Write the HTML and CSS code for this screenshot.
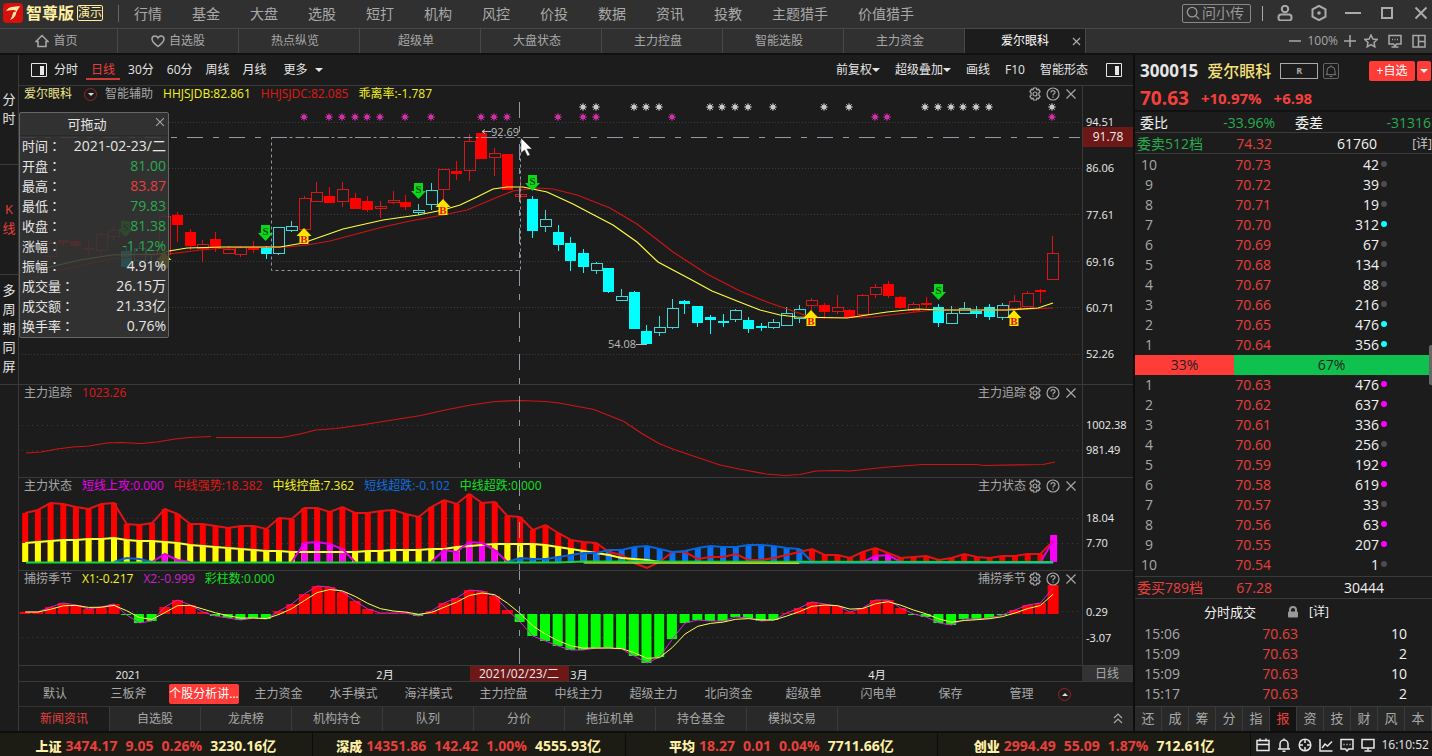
FILE: index.html
```html
<!DOCTYPE html>
<html lang="zh-CN">
<head>
<meta charset="utf-8">
<title>爱尔眼科 300015</title>
<link rel="stylesheet" href="styles.css">
</head>
<body>
<svg class="defs" aria-hidden="true">
  <symbol id="i-gear" viewBox="0 0 14 14"><path d="M5.6 1h2.8l.5 1.7 1.7-.4 1.5 2.3-1.2 1.2v2.4l1.2 1.2-1.5 2.3-1.7-.4-.5 1.7H5.6l-.5-1.7-1.7.4-1.5-2.3 1.2-1.2V5.8L1.900 4.600l1.500-2.300 1.700.400z"/><circle cx="7" cy="7" r="2"/></symbol>
  <symbol id="i-help" viewBox="0 0 14 14"><circle cx="7" cy="7" r="6"/><path d="M5 5.600C5 3 9 3 9 5.400 9 6.800 7 6.900 7 8.400M7 9.600v1.200"/></symbol>
  <symbol id="i-x" viewBox="0 0 14 14"><path d="M2.500 2.500l9 9M11.500 2.500l-9 9"/></symbol>
  <symbol id="i-home" viewBox="0 0 14 14"><path d="M7 1.500L1 7.500h2V12.500h8V7.500h2z"/></symbol>
  <symbol id="i-heart" viewBox="0 0 14 14"><path d="M7 12.500C3 9.500 1 7.500 1 5c0-3.500 4.500-4 6-1 1.500-3 6-2.500 6 1 0 2.500-2 4.500-6 7.500z"/></symbol>
  <symbol id="i-pane" viewBox="0 0 16 16"><path d="M.5 1.500h15v13H.5z"/><path class="solid" d="M9 4h4v9H9z"/></symbol>
  <symbol id="i-bell" viewBox="0 0 16 16"><path d="M8 1.500v1.500M3.500 12V7.500a4.500 4.500 0 0 1 9 0V12M2 12.200h12M6.500 14.200h3"/></symbol>
</svg>

<header class="titlebar">
  <svg class="logo" viewBox="0 0 20 20"><rect width="20" height="20" rx="4" fill="#d7100c"/><path d="M3 8C6 3 10 4 17 3c-1 3-4 5-4 8-1 3-3 5-6 6 3-4 2-7 5-10-3 0-6 0-9 1z" fill="#ffe9a0"/><path d="M8 9l5-1" stroke="#d7100c"/></svg>
  <strong class="brand">智尊版</strong><span class="demo">演示</span>
  <nav class="menu"><a href="#">行情</a><a href="#">基金</a><a href="#">大盘</a><a href="#">选股</a><a href="#">短打</a><a href="#">机构</a><a href="#">风控</a><a href="#">价投</a><a href="#">数据</a><a href="#">资讯</a><a href="#">投教</a><a href="#">主题猎手</a><a href="#">价值猎手</a></nav>
  <div class="winctl">
    <button class="ask"><svg class="ic" viewBox="0 0 16 16"><circle cx="7" cy="7" r="5.500"/><path d="M11 11l4 4"/></svg>问小传</button>
    <i class="bar"></i>
    <button aria-label="用户"><svg class="ic big" viewBox="0 0 16 16"><circle cx="8" cy="4" r="3.200"/><rect x="1.500" y="9.500" width="13" height="6" rx="2.500"/></svg></button>
    <button aria-label="设置"><svg class="ic big" viewBox="0 0 16 16"><path d="M8 .8l6.500 3.600v7.200L8 15.200 1.500 11.600V4.400z"/><circle cx="8" cy="8" r="1.800" class="solid"/></svg></button>
    <button aria-label="最小化"><svg class="ic big" viewBox="0 0 16 16"><path d="M0 8h16"/></svg></button>
    <button aria-label="最大化"><svg class="ic big" viewBox="0 0 16 16"><path d="M3 3h10v10H3z"/></svg></button>
    <button aria-label="关闭"><svg class="ic big" viewBox="0 0 16 16"><path d="M2.500 2.500l11 11M13.500 2.500l-11 11"/></svg></button>
  </div>
</header>

<nav class="tabs">
  <a href="#" class="tab home"><svg class="ic"><use href="#i-home"/></svg>首页</a>
  <a href="#" class="tab fav"><svg class="ic"><use href="#i-heart"/></svg>自选股</a>
  <a href="#" class="tab">热点纵览</a><a href="#" class="tab">超级单</a><a href="#" class="tab">大盘状态</a><a href="#" class="tab">主力控盘</a><a href="#" class="tab">智能选股</a><a href="#" class="tab">主力资金</a>
  <a href="#" class="tab on">爱尔眼科<svg class="ic close"><use href="#i-x"/></svg></a>
  <div class="zoom">
    <button aria-label="缩小"><svg class="ic" viewBox="0 0 14 14"><path d="M1 7h12"/></svg></button><span>100%</span>
    <button aria-label="放大"><svg class="ic" viewBox="0 0 14 14"><path d="M1 7h12M7 1v12"/></svg></button>
    <button class="sp" aria-label="收藏"><svg class="ic" viewBox="0 0 14 14"><path d="M7 1l1.900 4 4.300.5-3.200 3 .8 4.300L7 10.700l-3.800 2.100.8-4.300-3.200-3L5.100 5z"/></svg></button>
    <button class="sp2" aria-label="消息"><svg class="ic" viewBox="0 0 14 14"><path d="M1 1.500h12v8.500H8.500L7 12 5.500 10H1zM3.500 13h7M4 5.500h1M6.500 5.500h1M9 5.500h1"/></svg></button>
    <button class="sp2" aria-label="布局"><svg class="ic" viewBox="0 0 14 14"><path d="M1 1.500h12v11.500H1zM6.500 1.500V13M6.500 7.500h6"/></svg></button>
  </div>
</nav>

<main class="work">
  <nav class="rail"><a href="#">分时</a><a href="#" class="red">K线</a><a href="#">多周期同屏</a></nav>

  <section class="center">
    <div class="toolbar">
      <button aria-label="左侧栏"><svg class="ic pane"><use href="#i-pane"/></svg></button>
      <div class="periods"><button>分时</button><button class="on">日线</button><button>30分</button><button>60分</button><button>周线</button><button>月线</button><button class="more">更多<i class="caret"></i></button></div>
      <div class="tools"><button>前复权<i class="caret"></i></button><button>超级叠加<i class="caret"></i></button><button>画线</button><button>F10</button><button>智能形态</button></div>
      <button aria-label="右侧栏"><svg class="ic pane"><use href="#i-pane"/></svg></button>
    </div>

    <section class="panel main">
      <svg class="plot" id="kline" viewBox="19 86 1114 298" preserveAspectRatio="xMinYMin meet"></svg>
      <div class="legend"><span class="name">爱尔眼科</span><button class="round" aria-label="展开"><i class="caret small"></i></button><span class="aux">智能辅助</span><span class="y">HHJSJDB:82.861</span><span class="r">HHJSJDC:82.085</span><span class="y">乖离率:-1.787</span>
        <span class="acts"><button aria-label="设置"><svg class="ic"><use href="#i-gear"/></svg></button><button aria-label="帮助"><svg class="ic"><use href="#i-help"/></svg></button><button aria-label="关闭"><svg class="ic"><use href="#i-x"/></svg></button></span></div>
      <aside class="tip">
        <h2>可拖动<button aria-label="关闭"><svg class="ic"><use href="#i-x"/></svg></button></h2>
        <dl>
          <div><dt>时间<span lang="zh-TW">：</span></dt><dd>2021-02-23/二</dd></div>
          <div><dt>开盘<span lang="zh-TW">：</span></dt><dd class="dn">81.00</dd></div>
          <div><dt>最高<span lang="zh-TW">：</span></dt><dd class="up">83.87</dd></div>
          <div><dt>最低<span lang="zh-TW">：</span></dt><dd class="dn">79.83</dd></div>
          <div><dt>收盘<span lang="zh-TW">：</span></dt><dd class="dn">81.38</dd></div>
          <div><dt>涨幅<span lang="zh-TW">：</span></dt><dd class="dn">-1.12%</dd></div>
          <div><dt>振幅<span lang="zh-TW">：</span></dt><dd>4.91%</dd></div>
          <div><dt>成交量<span lang="zh-TW">：</span></dt><dd>26.15万</dd></div>
          <div><dt>成交额<span lang="zh-TW">：</span></dt><dd>21.33亿</dd></div>
          <div><dt>换手率<span lang="zh-TW">：</span></dt><dd>0.76%</dd></div>
        </dl>
      </aside>
    </section>

    <section class="panel">
      <svg class="plot" id="trace" viewBox="19 385 1114 92" preserveAspectRatio="xMinYMin meet"></svg>
      <div class="legend"><span>主力追踪</span><span class="r">1023.26</span>
        <span class="acts">主力追踪<button aria-label="设置"><svg class="ic"><use href="#i-gear"/></svg></button><button aria-label="帮助"><svg class="ic"><use href="#i-help"/></svg></button><button aria-label="关闭"><svg class="ic"><use href="#i-x"/></svg></button></span></div>
    </section>
    <section class="panel">
      <svg class="plot" id="state" viewBox="19 478 1114 92" preserveAspectRatio="xMinYMin meet"></svg>
      <div class="legend"><span>主力状态</span><span class="m">短线上攻:0.000</span><span class="r">中线强势:18.382</span><span class="y">中线控盘:7.362</span><span class="b">短线超跌:-0.102</span><span class="g">中线超跌:0.000</span>
        <span class="acts">主力状态<button aria-label="设置"><svg class="ic"><use href="#i-gear"/></svg></button><button aria-label="帮助"><svg class="ic"><use href="#i-help"/></svg></button><button aria-label="关闭"><svg class="ic"><use href="#i-x"/></svg></button></span></div>
    </section>
    <section class="panel">
      <svg class="plot" id="season" viewBox="19 571 1114 94" preserveAspectRatio="xMinYMin meet"></svg>
      <div class="legend"><span>捕捞季节</span><span class="y">X1:-0.217</span><span class="m2">X2:-0.999</span><span class="g">彩柱数:0.000</span>
        <span class="acts">捕捞季节<button aria-label="设置"><svg class="ic"><use href="#i-gear"/></svg></button><button aria-label="帮助"><svg class="ic"><use href="#i-help"/></svg></button><button aria-label="关闭"><svg class="ic"><use href="#i-x"/></svg></button></span></div>
    </section>
    <div class="dates"><svg class="plot" id="dates" viewBox="19 666 1114 15" preserveAspectRatio="xMinYMin meet"></svg></div>

    <nav class="presets"><a href="#">默认</a><a href="#">三板斧</a><a href="#" class="on"><span>个股分析讲...</span></a><a href="#">主力资金</a><a href="#">水手模式</a><a href="#">海洋模式</a><a href="#">主力控盘</a><a href="#">中线主力</a><a href="#">超级主力</a><a href="#">北向资金</a><a href="#">超级单</a><a href="#">闪电单</a><a href="#">保存</a><a href="#">管理</a><button class="round" aria-label="收起"><i class="caret small flip"></i></button></nav>
    <nav class="info"><a href="#" class="on">新闻资讯</a><a href="#">自选股</a><a href="#">龙虎榜</a><a href="#">机构持仓</a><a href="#">队列</a><a href="#">分价</a><a href="#">拖拉机单</a><a href="#">持仓基金</a><a href="#">模拟交易</a><button aria-label="展开"><svg class="ic" viewBox="0 0 14 14"><path d="M3 6l4-4 4 4M3 11l4-4 4 4"/></svg></button></nav>
  </section>

  <aside class="quote">
    <div class="head">
      <strong class="code">300015</strong><span class="stock">爱尔眼科</span><span class="rbox">R</span><button class="alert" aria-label="提醒"><svg class="ic"><use href="#i-bell"/></svg></button>
      <span class="add"><button>+自选</button><button aria-label="更多"><i class="caret"></i></button></span>
    </div>
    <div class="price"><strong>70.63</strong><b>+10.97%</b><b>+6.98</b></div>
    <div class="row ratio"><span>委比</span><span class="dn">-33.96%</span><span>委差</span><span class="dn">-31316</span></div>
    <div class="row sum"><span class="dn">委卖512档</span><span class="up">74.32</span><span>61760</span><a href="#">[详]</a></div>
    <table class="book"><tbody id="asks"></tbody></table>
    <div class="split"><span class="buy">33%</span><span class="sell">67%</span><i class="thumb"></i></div>
    <table class="book"><tbody id="bids"></tbody></table>
    <div class="row sum bid"><span class="up">委买789档</span><span class="up">67.28</span><span>30444</span></div>
    <div class="dealhead"><span>分时成交</span><svg class="lock" viewBox="0 0 12 12"><path d="M3 6V4a3 3 0 0 1 6 0v2" fill="none" stroke="#999" stroke-width="2"/><rect x="1" y="5.500" width="10" height="6" rx="1" fill="#999"/></svg><a href="#">[详]</a></div>
    <table class="deals"><tbody>
      <tr><td>15:06</td><td>70.63</td><td>10</td><td></td></tr>
      <tr><td>15:09</td><td>70.63</td><td>2</td><td></td></tr>
      <tr><td>15:09</td><td>70.63</td><td>10</td><td></td></tr>
      <tr><td>15:17</td><td>70.63</td><td>2</td><td></td></tr>
    </tbody></table>
    <nav class="qtabs"><a href="#">还</a><a href="#">成</a><a href="#">筹</a><a href="#">分</a><a href="#">指</a><a href="#" class="on">报</a><a href="#">资</a><a href="#">技</a><a href="#">财</a><a href="#">风</a><a href="#">本</a></nav>
  </aside>
</main>

<footer class="status">
  <div class="idx"><b>上证</b><span>3474.17</span><span>9.05</span><span>0.26%</span><em>3230.16亿</em></div>
  <div class="idx"><b>深成</b><span>14351.86</span><span>142.42</span><span>1.00%</span><em>4555.93亿</em></div>
  <div class="idx"><b>平均</b><span>18.27</span><span>0.01</span><span>0.04%</span><em>7711.66亿</em></div>
  <div class="idx"><b>创业</b><span>2994.49</span><span>55.09</span><span>1.87%</span><em>712.61亿</em></div>
  <div class="sys">
    <svg class="ic" viewBox="0 0 14 14"><path d="M1 2.500h12v10H1zM1 6.500h12M4 .5v3M10 .5v3"/></svg>
    <svg class="ic" viewBox="0 0 14 14"><path d="M1 11h12M3 11V6a4 4 0 0 1 8 0v5M7 .5V2M5.500 13.200h3"/></svg>
    <svg class="ic" viewBox="0 0 14 14"><circle cx="7" cy="7" r="5.800"/><path d="M7 1v4M7 9v4M1 7h4M9 7h4"/></svg>
    <svg class="ic" viewBox="0 0 14 14"><path d="M1 1v12h12.500M3 10l3-4 2.500 2L13 3.500"/></svg>
    <svg class="ic" viewBox="0 0 14 14"><path d="M1 1.500h12v9.500H8.500L7 13 5.500 11H1zM3.500 6.500h1M6.500 6.500h1M9.500 6.500h1"/></svg>
    <svg class="ic" viewBox="0 0 14 14"><path d="M1 1.500h12v8.500H1zM7 10v2.500M3.500 13h7"/></svg>
    <time>16:10:52</time>
  </div>
</footer>
<script src="charts.js"></script>
</body>
</html>
```
FILE: styles.css
```css
* { box-sizing: border-box; }
body {
  margin: 0; height: 100vh; min-height: 640px; display: flex; flex-direction: column; overflow: hidden;
  background: #1c1c1c; color: #e6e6e6;
  font: 12px/16px "Open Sans", "Noto Sans CJK SC", sans-serif; white-space: nowrap;
}
a { color: inherit; text-decoration: none; }
button { font: inherit; color: inherit; background: none; border: 0; padding: 0; display: inline-flex; align-items: center; }
h2, dl, dd { margin: 0; font-weight: 400; }
i, em { font-style: normal; }
.defs { position: absolute; width: 0; height: 0; }
.ic { width: 14px; height: 14px; fill: none; stroke: currentColor; stroke-width: 1.5; flex: none; display: block; }
.ic.big { width: 16px; height: 16px; stroke-width: 2; }
.solid { fill: currentColor; stroke: none; }
.caret { width: 0; height: 0; border: 4px solid transparent; border-top-color: currentColor; border-bottom: 0; }
.caret.small { border-width: 3px; border-bottom: 0; border-top-color: #ddd; }
.flip { transform: rotate(180deg); }
.up { color: #e8403c; }
.dn { color: #27ad4f; }
.y { color: #f4f41c; }
.r { color: #e01818; }
.m { color: #ee00ee; }
.m2 { color: #cc22cc; }
.b { color: #1070e0; }
.g { color: #10e020; }

.titlebar { flex: none; height: 29px; display: flex; align-items: center; background: #303030; border-bottom: 1px solid #484848; padding: 0 3px 2px; color: #aaa; font-size: 14px; }
.logo { width: 20px; height: 20px; }
.brand { color: #fff0a0; font-size: 16px; line-height: 20px; margin-left: 3px; }
.demo { color: #ffee9a; border: 1px solid #ffee9a; font-size: 12px; line-height: 14px; border-radius: 2px; margin-left: 3px; }
.menu { display: flex; gap: 30px; margin-left: 15px; padding-left: 15px; border-left: 1px solid #666; line-height: 16px; }
.menu a { padding-top: 1px; }
.winctl { margin-left: auto; display: flex; align-items: center; gap: 18px; }
.ask { border: 1px solid #888; border-radius: 2px; height: 19px; width: 69px; gap: 2px; padding: 0 3px; color: #999; }
.bar { width: 1px; height: 15px; background: #aaa; margin: 0 -4px 0 -7px; }

.tabs { flex: none; height: 26px; display: flex; background: #303030; color: #a8a8a8; border-bottom: 2px solid #111; }
.tab { width: 121px; display: flex; align-items: center; justify-content: center; gap: 4px; border-right: 1px solid #484848; padding-right: 8px; }
.tab.home { width: 118px; padding-right: 4px; }
.tab.fav { padding-right: 0; }
.tab.on { background: #1c1c1c; color: #fff; display: grid; grid-template-columns: 32px 1fr 14px; padding: 0; }
.tab.on::before { content: ""; }
.tab .close { width: 11px; height: 11px; color: #aaa; }
.zoom { margin-left: auto; display: flex; align-items: center; gap: 5px; padding-right: 6px; }
.zoom .sp { margin-left: 2px; }
.zoom .sp2 { margin-left: 5px; }

.work { flex: 1; min-height: 0; display: flex; }
.rail { width: 19px; border-right: 1px solid #3a3a3a; font-size: 13px; line-height: 19px; }
.rail a { height: 110px; display: flex; align-items: center; justify-content: center; text-align: center; white-space: normal; word-break: break-all; padding: 0 2px 2px; border-bottom: 1px solid #3a3a3a; }
.rail .red { color: #e8403c; }
.center { flex: 1; min-width: 0; display: grid; grid-template-columns: minmax(0, 1fr); grid-template-rows: 31px minmax(0, 299fr) minmax(0, 93fr) minmax(0, 93fr) minmax(0, 95fr) 16px 25px 24px; }
.toolbar { display: flex; align-items: center; padding: 0 11px 0 12px; border-bottom: 1px solid #3a3a3a; }
.pane { width: 16px; height: 16px; stroke-width: 1; color: #e6e6e6; }
.periods, .tools { display: flex; gap: 13px; margin-left: 7px; }
.periods .on { color: #e8403c; box-shadow: 0 2px 0 #d03a36; padding: 0 5px; margin: 0 -5px; }
.periods .more { margin-left: 4px; gap: 7px; }
.tools { margin-left: auto; gap: 15px; margin-right: 18px; }

.panel { display: grid; grid-template: 1fr / 1fr; border-bottom: 1px solid #3a3a3a; min-height: 0; position: relative; }
.plot { grid-area: 1 / 1; width: 100%; height: 100%; display: block; min-height: 0; }
.legend { grid-area: 1 / 1; align-self: start; display: flex; align-items: center; gap: 10px; padding: 0 55px 0 5px; color: #a8a8a8; }
.legend .name { color: #f0e68c; }
.acts { margin-left: auto; display: flex; align-items: center; gap: 4px; }
.acts .ic { width: 14px; height: 14px; stroke-width: 1.2; }
.acts button:first-of-type { margin-left: -2px; }
.round { width: 13px; height: 13px; border: 1px solid #a02020; border-radius: 50%; justify-content: center; flex: none; }
.legend .round { margin: 0 -2px 0 2px; }
.plot text { font-family: "Open Sans", "Noto Sans CJK SC", sans-serif; font-size: 11px; fill: #ececec; }
.plot .sig { font-family: "Liberation Serif", serif; font-weight: 700; font-size: 11px; text-anchor: middle; }
.plot .mid { text-anchor: middle; }
.plot .t12 { font-size: 12px; }

.tip { position: absolute; left: 0; top: 26px; width: 150px; border: 1px solid #666; border-radius: 2px; background: rgba(52, 52, 52, .88); }
.tip h2 { display: grid; grid-template-columns: 24px 1fr 14px; align-items: center; height: 23px; font-size: 13px; text-align: center; border-bottom: 1px solid #292929; padding-right: 0; }
.tip h2 { grid-template-columns: 1fr 14px; padding-left: 0; }
.tip h2 .ic { width: 12px; height: 12px; stroke-width: 1.2; color: #aaa; }
.tip h2 button { align-self: start; padding-top: 3px; }
.tip dl { padding: 0 2px 1px; }
.tip dl div { display: flex; justify-content: space-between; line-height: 20px; }
.tip dt { font-size: 13px; }
.tip dt span { font-family: "Noto Sans CJK TC", sans-serif; }
.tip dd { font-size: 14px; }

.dates { border-bottom: 1px solid #3a3a3a; }
.presets { display: grid; grid-template-columns: 72px repeat(11, 75px) 69px 73px 13px; align-items: center; color: #a8a8a8; text-align: center; border-bottom: 1px solid #333; }
.presets .on span { display: block; margin: 0 2px 0 3px; background: #ff3c38; color: #fff; border-radius: 2px; line-height: 20px; }
.info { display: flex; background: #292929; color: #a8a8a8; }
.info a { width: 91px; text-align: center; line-height: 23px; border-right: 1px solid #3a3a3a; }
.info .on { background: #1c1c1c; color: #e8403c; }
.info button { margin-left: auto; margin-right: 8px; }
.info .ic { stroke-width: 1.2; }

.quote { width: 299px; border-left: 2px solid #0e0e0e; font-size: 14px; line-height: 20px; display: flex; flex-direction: column; }
.head { display: flex; align-items: center; padding-left: 5px; height: 32px; }
.code { font-size: 17px; }
.stock { color: #f7e27a; font-size: 16px; font-weight: 500; margin-left: 9px; }
.rbox { width: 38px; border: 1px solid #aaa; font-size: 9px; font-weight: 700; line-height: 14px; text-align: center; color: #aaa; margin-left: 9px; }
.alert { border: 1px solid #666; border-radius: 2px; margin-left: 5px; color: #888; height: 16px; width: 16px; justify-content: center; }
.alert .ic { stroke-width: 1; }
.add { margin-left: auto; display: flex; gap: 2px; margin-right: 1px; font-size: 12px; }
.add button { background: #ff3c38; color: #fff; height: 20px; width: 46px; justify-content: center; border-radius: 2px; }
.add button + button { width: 14px; }
.price { display: flex; align-items: center; gap: 12px; height: 25px; padding: 0 5px 2px; color: #f5403c; border-bottom: 2px solid #111; font-size: 15px; }
.price strong { font-size: 19px; }
.row { height: 21px; border-bottom: 1px solid #3a3a3a; display: grid; line-height: 22px; color: #f2f2f2; }
.row .up { color: #e8403c; }
.row .dn { color: #27ad4f; }
.ratio { grid-template-columns: 55px 80px 52px 1fr; padding: 0 1px 0 5px; }
.ratio span:nth-child(even) { text-align: right; }
.ratio span:nth-child(3) { padding-left: 20px; }
.sum { grid-template-columns: 70px 65px 105px 1fr; padding-left: 2px; }
.sum span + span { text-align: right; }
.sum a { text-align: right; font-size: 12px; color: #ccc; }
.sum.bid { border-top: 1px solid #3a3a3a; height: 23px; margin-top: 1px; grid-template-columns: 70px 65px 112px 1fr; }
table { border-collapse: collapse; table-layout: fixed; width: 100%; }
td { padding: 0; height: 20px; text-align: right; color: #f2f2f2; }
.book td:nth-child(1) { width: 28px; text-align: center; color: #a8a8a8; }
.book td:nth-child(2) { width: 108px; color: #e8403c; }
.book td:nth-child(3) { width: 108px; }
.book td:nth-child(4) { text-align: left; padding-left: 2px; }
.dot { display: block; width: 6px; height: 6px; border-radius: 50%; background: #4a4c50; margin-bottom: 3px; }
.dot.c { background: #1ff; }
.dot.m { background: #f0f; }
.ratio + .sum { margin-bottom: 1px; }
.split { display: flex; height: 20px; color: #222; text-align: center; }
.buy { width: 99px; background: #ff3c38; }
.sell { flex: 1; background: #0fc24f; }
.thumb { width: 3px; height: 40px; margin-top: -10px; background: #666; border-radius: 2px 0 0 2px; }
.dealhead { display: flex; align-items: center; height: 25px; padding-left: 69px; font-size: 13px; color: #f2f2f2; }
.lock { width: 12px; height: 12px; margin: 0 10px 0 31px; }
.dealhead a { font-size: 12px; }
.deals td:nth-child(1) { width: 45px; color: #a8a8a8; }
.deals td:nth-child(2) { width: 118px; color: #e8403c; }
.deals td:nth-child(3) { width: 109px; }
.qtabs { margin-top: auto; display: grid; grid-template-columns: repeat(11, 1fr); height: 25px; background: #292929; color: #a8a8a8; border-top: 1px solid #3a3a3a; font-size: 13px; line-height: 23px; text-align: center; }
.qtabs a { border-right: 1px solid #3a3a3a; }
.qtabs .on { background: #141414; color: #e8403c; }

.status { flex: none; height: 25px; border-top: 2px solid #0e0e0e; display: flex; background: #1c1c14; font-size: 14px; font-weight: 700; }
.idx { flex: 1; display: flex; align-items: center; justify-content: center; gap: 8px; border-right: 1px solid #0c0c0c; color: #e8403c; padding-top: 2px; }
.idx b, .idx em { color: #fff0a8; }
.idx b { font-size: 13px; margin-right: -4px; }
.sys { width: 181px; display: flex; align-items: center; justify-content: space-between; padding: 0 3px 0 5px; background: #1c1c1c; font-weight: 400; font-size: 12px; }
```
FILE: charts.js
```js
const X0 = 265.7, STEP = 12.69;
const xAt = i => X0 + STEP * i;
const put = (id, parts) => { document.getElementById(id).innerHTML = parts.join(''); };
const pts = list => list.map(p => p.join(',')).join(' ');
const line = (list, color, w = 1) => `<polyline points="${pts(list)}" fill="none" stroke="${color}" stroke-width="${w}"/>`;
const rect = (x, y, w, h, fill) => `<rect x="${x}" y="${y}" width="${w}" height="${h}" fill="${fill}"/>`;
const gridLine = (y, dash) => `<path d="M22 ${y + .5}H1080" stroke="#3c3c3c" stroke-dasharray="${dash}" fill="none"/>`;
const axis = list => list.map(([y, t]) => `<text x="1086" y="${y + 4}">${t}</text>`).join('') + '<path d="M1082.5 80V670" stroke="#3a3a3a"/>';
const cross = '<path d="M519.5 102V665" stroke="#8e9aa6" stroke-dasharray="16 8 6 12" fill="none"/>';

/* K线: index, wick top, body top, body bottom, wick bottom, colour (r/c), h = hollow */
const candles = [
  [-17,240,243,256,262,'rh'],[-16,239,240,243,246,'r'],[-15,239,241,246,248,'r'],[-14,240,248,250,256,'r'],[-13,231,234,250,256,'rh'],[-12,226,230,236,240,'rh'],
  [-11,246,251,267,269,'c'],[-10,244,248,260,263,'ch'],[-9,243,250,254,262,'ch'],[-8,214,216,254,256,'rh'],[-7,212,215,225,242,'r'],[-6,229,232,246,250,'r'],
  [-5,240,244,248,262,'rh'],[-4,232,239,248,252,'r'],[-3,246,249,253,253,'rh'],[-2,246,247,254,257,'rh'],[-1,241,248,249,253,'r'],
  [0,246,248,254,259,'c'],[1,227,227,253,255,'ch'],[2,221,226,230,232,'ch'],[3,196,198,229,229,'rh'],[4,182,192,201,201,'rh'],[5,187,196,203,203,'r'],
  [6,182,189,201,207,'rh'],[7,193,198,209,209,'r'],[8,196,201,210,212,'r'],[9,201,206,208,218,'rh'],[10,191,200,202,204,'rh'],[11,195,202,207,210,'r'],
  [12,204,210,212,215,'ch'],[13,183,190,204,210,'ch'],[14,169,169,189,201,'rh'],[15,161,171,174,180,'r'],[16,134,141,170,181,'rh'],[17,133,133,159,159,'r'],
  [18,148,153,157,176,'rh'],[19,154,154,190,190,'r'],[20,180,194,196,202,'rh'],[21,196,199,231,238,'c'],[22,210,219,226,232,'ch'],[23,225,232,245,251,'c'],
  [24,237,243,261,271,'c'],[25,249,253,267,273,'c'],[26,262,263,270,274,'ch'],[27,268,268,292,293,'c'],[28,289,296,300,300,'ch'],[29,291,292,329,329,'c'],
  [30,325,331,344,344,'c'],[31,316,327,332,336,'ch'],[32,299,308,327,329,'ch'],[33,300,301,304,314,'c'],[34,306,306,323,327,'c'],[35,315,317,320,334,'c'],
  [36,314,321,323,327,'c'],[37,309,310,319,322,'ch'],[38,317,320,329,333,'c'],[39,323,326,328,331,'c'],[40,319,322,327,329,'ch'],[41,307,313,325,325,'ch'],
  [42,305,309,318,323,'ch'],[43,298,300,305,312,'rh'],[44,303,305,312,319,'r'],[45,295,307,311,314,'rh'],[46,309,310,317,317,'r'],[47,294,295,314,314,'rh'],
  [48,284,287,294,298,'rh'],[49,281,284,296,298,'r'],[50,296,297,308,309,'r'],[51,302,304,310,312,'rh'],[52,297,303,305,308,'r'],[53,304,307,323,327,'c'],
  [54,306,313,323,323,'ch'],[55,302,308,313,313,'ch'],[56,306,311,314,318,'c'],[57,304,307,317,320,'c'],[58,303,305,317,320,'ch'],[59,295,301,308,310,'rh'],
  [60,291,293,306,306,'rh'],[61,289,290,292,303,'r'],[62,236,253,279,279,'rh']
];
const candle = ([i, wt, bt, bb, wb, k]) => {
  const x = Math.round(xAt(i)) + .5, red = k[0] === 'r', hollow = k.length > 1;
  const edge = red ? (hollow ? '#d81818' : '#f00') : (hollow ? '#3fd9d9' : '#0ff');
  const wick = hollow ? `M${x} ${wt}V${bt}M${x} ${bb}V${wb}` : `M${x} ${wt}V${wb}`;
  const body = hollow ? `<rect x="${x - 5}" y="${bt + .5}" width="11" height="${Math.max(bb - bt, 2)}" fill="none" stroke="${edge}"/>` : rect(x - 5.5, bt, 11, Math.max(bb - bt, 2), edge);
  return `<path d="${wick}" stroke="${edge}"/>${body}`;
};
const yellowMA = [[40,269],[50,267],[80,260],[112,255],[160,254],[169,251],[187,248],[223,247],[280,247],[303,243],[343,229],[383,220],[418,215],[443,210],[460,205],[477,197],[493,189],[507,187],[523,187],[547,192],[573,204],[592,214],[613,225],[637,242],[658,262],[673,270],[690,279],[712,291],[737,301],[760,310],[780,315],[797,317],[847,318],[867,315],[887,312],[917,309],[940,310],[1007,310],[1038,308],[1053,303]];
const redMA = [[57,271],[110,259],[169,254],[200,250],[227,248],[287,247],[307,245],[330,241],[360,233],[383,227],[410,221],[443,215],[467,210],[493,199],[513,191],[537,188],[553,189],[577,195],[610,208],[637,224],[673,252],[707,274],[740,291],[767,302],[790,310],[807,316],[817,318],[873,317],[907,313],[933,310],[1007,310],[1053,308]];
const star = (x, y, c) => `<path d="M${x - 4} ${y}h8M${x} ${y - 4}v8M${x - 3} ${y - 3}l6 6M${x + 3} ${y - 3}l-6 6" stroke="${c}" opacity=".75"/><circle cx="${x}" cy="${y}" r="2.500" fill="${c}"/>`;
const sell = (x, y) => `<path d="M${x - 4} ${y - 8}h9v8h3l-7.500 8-7.500-8h3z" fill="#0bd818"/><text class="sig" x="${x + .5}" y="${y + 2}" style="fill:#064d0a">S</text>`;
const arrowUp = (x, y) => `<path d="M${x - 4.500} ${y + 8}h9v-8h3l-7.500-8-7.500 8h3z" fill="#ffe600"/>`;
const buy = (x, y) => `${arrowUp(x, y)}<text class="sig" x="${x}" y="${y + 7}" style="fill:#f01010">B</text>`;
put('kline', [
  ...[122, 168, 214, 261, 307, 354].map(y => gridLine(y, '1 2')),
  ...candles.map(candle), line(redMA, '#d01414', 1.2), line(yellowMA, '#ffff3c', 1.2),
  ...[304,329,342,355,367,380,405,431,481,494,507,558,583,596,672,875,887,1052].map(x => star(x, 117, '#d030a8')),
  ...[583,596,634,646,659,710,722,735,748,773,824,849,925,938,951,963,976,989,1052].map(x => star(x, 107, '#c8c8c8')),
  sell(125, 229), sell(265, 233), sell(418, 191), sell(532, 183), sell(938, 292),
  arrowUp(164, 260), buy(304, 236), buy(443, 207), buy(811, 318), buy(1014, 318),
  '<path d="M19 137.500H1080" stroke="#8e9aa6" stroke-dasharray="16 10 6 10"/>', cross,
  '<rect x="271.500" y="137.500" width="249" height="133" fill="none" stroke="#8e98a4" stroke-dasharray="3 3"/>',
  '<path d="M482 131.500h9M485 129.500l-3 2 3 2M636 344.500h11" stroke="#bbb" fill="none"/>',
  '<text x="491" y="136" style="fill:#bbb">92.69</text><text x="608" y="348" style="fill:#bbb">54.08</text>',
  axis([[122,'94.51'],[168,'86.06'],[215,'77.61'],[262,'69.16'],[308,'60.71'],[354,'52.26']]),
  rect(1083, 127, 50, 20, '#6e1717'), '<text class="mid t12" x="1108" y="141">91.78</text>',
  '<path d="M521 138v15l3.500-3 3 6 2.500-1-3-6h5z" fill="#fff" stroke="#333" stroke-width=".5"/>'
]);

const tr = [[26,453],[41,452],[57,449],[73,447],[89,446],[107,443],[121,442.5],[141,443.5],[157,442],[175,439],[189,437.5],[211,436.5]];
const tr2 = [[216,437.5],[282,437.5],[300,434],[316,430],[336,428.5],[361,425],[386,421],[421,415.5],[443,410.5],[468,405.5],[495,401.5],[519,400.5],[546,401.5],[559,403],[594,409.5],[624,421.5],[641,433],[659,443.5],[674,449.5],[720,465],[739,469],[766,474],[785,475.5],[800,474.5],[816,471],[835,470.5],[850,471],[888,467],[923,464.5],[976,464.5],[984,465.5],[1043,464.5],[1055,462]];
put('trace', [gridLine(425, '1 4'), gridLine(450, '1 4'), line(tr, '#d01414', 1.2), line(tr2, '#d01414', 1.2), cross, axis([[425,'1002.38'],[450,'981.49']])]);

const strong = [513,510,503,504,507,509,504,503,524,525,523,509,514,524,524,526,528,526,526,529,518,519,508,508,512,507,513,513,511,510,514,517,507,500,504,494,503,502,516,517,530,525,533,540,542,543,552,555,563,568,562,552,552,559,557,557,554,560,560,558,555,552,549,555,555,558,552,548,553,558,557,556,560,558,554,557,558,556,556,554,554,541];
const control = [543,542,541,540,540,539,539,538,540,541,541,542,543,545,546,547,548,549,550,551,551,552,552,552,552,552,552,551,551,550,550,550,549,549,547,546,545,544,544,544,544,545,547,549,551,553,555,558,559,560,562,562,562];
const BASE = 562;
const sx = n => +(xAt(n - 19) + .6).toFixed(1);
const bars = (list, from, to, color) => list.slice(from, to).map((y, k) => y < BASE ? rect(sx(from + k) - 3, y, 6, BASE - y, color) : '').join('');
const run = (start, list) => list.map((y, k) => [sx(start + k), y]);
const blue = [562,558,559,559,557,555,553,553,550,550,547,546,549,552,551,548,546,547,547,545,545,546,548,549,562];
const blueBars = run(38, blue);
const attack = [run(10, [562,554,560,562]), run(21, [562,543,542,544,549,562]), run(32, [562,550,552,542,543,550,562]), run(66, [562,556,555,562]), run(80, [562,541])];
put('state', [
  gridLine(518, '1 4'), gridLine(543, '1 4'),
  bars(strong, 0, 46, '#f00'), bars(strong, 62, 82, '#f00'),
  bars(control, 0, 50, '#ff0'),
  ...attack.slice(0, 4).map(a => a.map(([x, y]) => y < BASE ? rect(x - 3, y, 6, BASE - y, '#f0f') : '').join('')),
  blueBars.map(([x, y]) => y < 560 ? rect(x - 3, y, 6, BASE - y, '#0a70f5') : '').join(''),
  rect(sx(81) - 3, 535, 7, 27, '#f0f'),
  line(run(0, strong), '#e01414', 2), line(run(0, control), '#ffff30', 2),
  ...attack.map(a => line(a, '#e000e0', 2)),
  line(run(7, [562,558,559,562]), '#0a64d8', 2), line(blueBars, '#0a64d8', 2),
  line([[sx(44), 562.5], [sx(81), 563]], '#ffff30', 2), line([[sx(61), 563], [sx(81), 563]], '#1a70c0', 2),
  line([[26, 562.5], [sx(42), 562.5], [sx(44), 561.5], [sx(81), 562]], '#16d838', 2),
  cross, axis([[518,'18.04'],[543,'7.70']])
]);

const wave = [612,612,607,603,605,609,607,604,615,623,621,607,600,605,612,616,618,620,618,619,611,604,594,586,587,592,601,609,613,613,613,616,611,603,598,590,591,596,610,622,636,641,646,650,650,648,648,649,656,663,657,639,623,620,621,621,617,618,621,620,613,608,602,604,606,612,608,600,600,608,614,617,623,625,619,619,618,615,610,605,603,585];
const ZERO = 614;
let lag = wave[0];
const slow = wave.map((v, n) => { lag = lag * .45 + v * .55; return [sx(n), +lag.toFixed(1)]; });
put('season', [
  gridLine(611, '1 4'), gridLine(637, '1 4'),
  wave.map((v, n) => v < ZERO ? rect(sx(n) - 5.5, v, 11, ZERO - v, '#f00') : rect(sx(n) - 5.5, ZERO, 10, Math.max(v - ZERO, 1), '#0f0')).join(''),
  line(wave.map((v, n) => [sx(n), v === 585 ? 588 : v]), '#d028d0'), line(slow, '#ffff50'),
  cross, axis([[612,'0.29'],[638,'-3.07']])
]);

put('dates', [
  rect(470, 666, 99, 15, '#6e1717'), rect(1082, 666, 51, 15, '#333'),
  '<text class="mid" x="128" y="679">2021</text><text class="mid" x="385" y="679">2月</text><text class="mid t12" x="519" y="678">2021/02/23/二</text><text class="mid" x="579" y="679">3月</text><text class="mid" x="877" y="679">4月</text><text class="mid t12" x="1107" y="678" style="fill:#a8a8a8">日线</text>'
]);

const rows = (id, list) => put(id, list.map(([n, p, v, c]) => `<tr><td>${n}</td><td>${p}</td><td>${v}</td><td><i class="dot ${c || ''}"></i></td></tr>`));
rows('asks', [[10,'70.73',42],[9,'70.72',39],[8,'70.71',19],[7,'70.70',312,'c'],[6,'70.69',67],[5,'70.68',134],[4,'70.67',88],[3,'70.66',216],[2,'70.65',476,'c'],[1,'70.64',356,'c']]);
rows('bids', [[1,'70.63',476,'m'],[2,'70.62',637,'m'],[3,'70.61',336,'m'],[4,'70.60',256],[5,'70.59',192,'m'],[6,'70.58',619,'m'],[7,'70.57',33],[8,'70.56',63,'m'],[9,'70.55',207,'m'],[10,'70.54',1]]);
```
